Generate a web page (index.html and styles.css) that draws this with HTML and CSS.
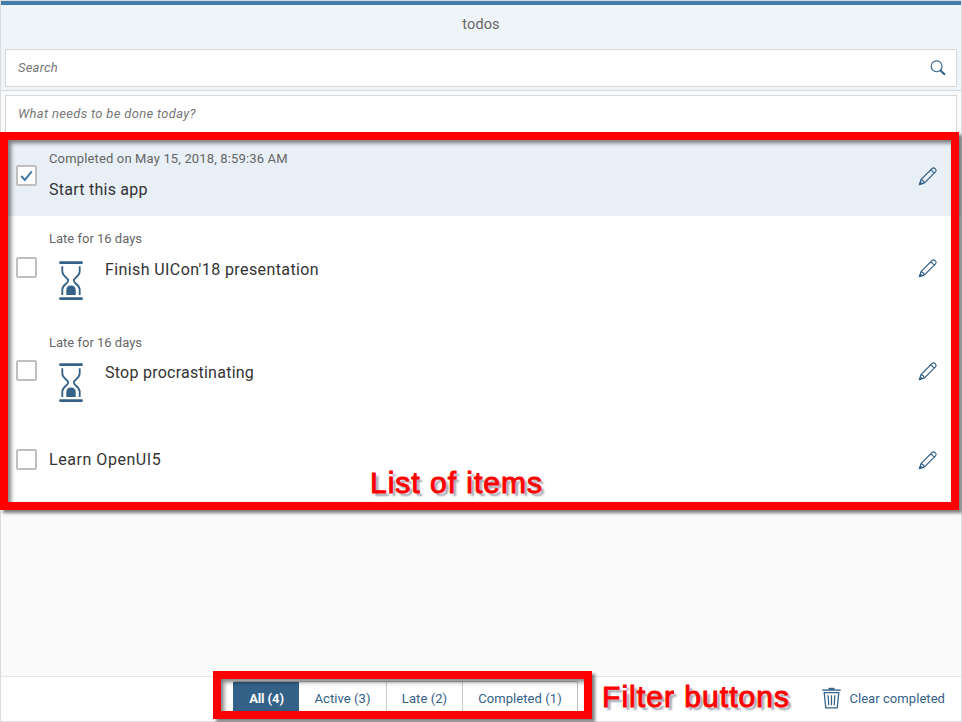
FILE: index.html
```
<!DOCTYPE html>
<html lang="en">
<head>
<meta charset="utf-8">
<title>todos</title>
<link rel="stylesheet" href="styles.css">
</head>
<body>
<svg class="sprite" aria-hidden="true">
  <symbol id="pencil" viewBox="0 0 20 20"><path d="M1.4 18.5 3 13.6 14.1 2.5Q15.6 1.2 17.1 2.6L17.6 3.1Q18.8 4.5 17.5 5.9L6.4 16.9Z M3 13.6Q5.6 14.2 6.4 16.9 M12.8 3.8 16.3 7.2" fill="none" stroke="currentColor" stroke-width="1.15"/><path d="m1.2 18.9 1.1-3.9 2.9 2.9z" fill="currentColor"/></symbol>
  <symbol id="hourglass" viewBox="0 0 24 40"><path d="M1.4 1.6H22.6M1.4 37.6H22.6" stroke="currentColor" stroke-width="2.8" stroke-linecap="round"/><path d="M3.3 5.2V10.5C3.3 15.5 9.2 16.5 9.2 19.5S3.3 24 3.3 28.5V34M20.7 5.2V10.5C20.7 15.5 14.8 16.5 14.8 19.5S20.7 24 20.7 28.5V34" fill="none" stroke="currentColor" stroke-width="1.8"/><path d="M7.3 34V29C7.3 26.3 9 24.4 12 24.4S16.7 26.3 16.7 29V34Z" fill="currentColor"/></symbol>
</svg>
<div class="page">
  <header class="header">
    <h1 class="title">todos</h1>
    <div class="field search"><span>Search</span>
      <svg class="search-icon" viewBox="0 0 16 16"><circle cx="6.6" cy="6.3" r="5.4" fill="none" stroke="currentColor" stroke-width="1.1"/><path d="m10.3 10.3 4.6 4.5" stroke="currentColor" stroke-width="2"/></svg>
    </div>
  </header>
  <main class="content">
    <div class="field new-todo"><span>What needs to be done today?</span></div>
    <ul class="list">
      <li class="item item-done">
        <span class="check"><svg viewBox="0 0 17 17"><path d="m3.2 9 3.7 4L13.8 4.4" fill="none" stroke="currentColor" stroke-width="2"/></svg></span>
        <div class="body"><p class="note note-done">Completed on May 15, 2018, 8:59:36 AM</p><p class="text t1">Start this app</p></div>
        <svg class="edit"><use href="#pencil"/></svg>
      </li>
      <li class="item item-late">
        <span class="check"></span>
        <div class="body"><p class="note">Late for 16 days</p><div class="row"><svg class="glass"><use href="#hourglass"/></svg><p class="text t2">Finish UICon'18 presentation</p></div></div>
        <svg class="edit"><use href="#pencil"/></svg>
      </li>
      <li class="item item-late item-third">
        <span class="check"></span>
        <div class="body"><p class="note">Late for 16 days</p><div class="row"><svg class="glass"><use href="#hourglass"/></svg><p class="text t3">Stop procrastinating</p></div></div>
        <svg class="edit"><use href="#pencil"/></svg>
      </li>
      <li class="item item-plain">
        <span class="check"></span>
        <div class="body"><p class="text t4">Learn OpenUI5</p></div>
        <svg class="edit"><use href="#pencil"/></svg>
      </li>
    </ul>
  </main>
  <footer class="footer">
    <div class="filters">
      <span class="filter f-all">All (4)</span><span class="filter f-active">Active (3)</span><span class="filter f-late">Late (2)</span><span class="filter f-completed">Completed (1)</span>
    </div>
    <div class="clear">
      <svg class="trash" viewBox="0 0 19 22"><path d="M.3 3.1H18.7" stroke="currentColor" stroke-width="1.4"/><path d="M6.5 2.7V1.5Q6.5.8 7.3.8h4.4q.8 0 .8.7v1.2Z" fill="currentColor"/><path d="M2.2 5.6 3.8 20.9H15.2L16.8 5.6ZM6.1 8.3 6.8 18.2M9.5 8.3V18.2M12.9 8.3 12.2 18.2" fill="none" stroke="currentColor" stroke-width="1.25"/></svg>
      <span>Clear completed</span>
    </div>
  </footer>
</div>
<div class="frame frame-list"></div>
<div class="frame frame-filters"></div>
<div class="label label-list">List of items</div>
<div class="label label-filters">Filter buttons</div>
</body>
</html>
```
FILE: styles.css
```
* { box-sizing: border-box; }
body { margin: 0; font-family: Roboto, "Noto Sans", sans-serif; font-size: 13px; color: #666; overflow: hidden; }
h1, p, ul { margin: 0; padding: 0; }
svg { display: block; flex: none; }
.sprite { position: absolute; width: 0; height: 0; }
.page { width: 962px; height: 722px; display: flex; flex-direction: column; border: 1px solid #dcdcdc; border-right-color: #d9dde0; background: #fafafa; }
.header { height: 90px; flex: none; border-top: 4px solid #427cac; border-bottom: 1px solid #d6d9dc; background: #eff4f9; padding: 0 4px; }
.title { height: 44px; line-height: 39px; text-align: center; font-size: 14.5px; font-weight: 400; letter-spacing: .1px; color: #666; }
.field { height: 38px; display: flex; align-items: center; justify-content: space-between; border: 1px solid #d5d8db; background: #fff; padding: 0 10px 2px 12px; font-style: italic; color: #777; letter-spacing: .2px; }
.search-icon { width: 16px; height: 16px; color: #346187; margin-top: 1px; }
.content { flex: 1; padding: 4px 0 0; }
.new-todo { margin: 0 4px; letter-spacing: .32px; }
.list { list-style: none; background: #fff; }
.item { display: flex; padding: 0 23px 0 15px; background: #fff; }
.item-done { height: 83px; background: #e8eff7; }
.item-late { height: 103px; }
.item-plain { height: 89px; }
.check { width: 21px; height: 21px; flex: none; border: 2px solid #bfbfbf; border-radius: 2px; background: #fff; color: #427cac; margin-top: 41px; }
.item-done .check { margin-top: 32px; }
.item-third .check { margin-top: 41px; }
.item-plain .check { margin-top: 27px; }
.check svg { width: 17px; height: 17px; }
.body { flex: 1; margin-left: 12px; padding-top: 14px; }
.item-done .body { padding-top: 17px; }
.item-third .body { padding-top: 15px; }
.item-plain .body { padding-top: 27px; }
.note { line-height: 18px; letter-spacing: 0; }
.note-done { letter-spacing: .15px; }
.text { font-size: 16px; line-height: 22px; color: #333; letter-spacing: .25px; }
.t1 { margin-top: 11px; }
.t2 { letter-spacing: .4px; margin-top: -2px; }
.t3 { margin-top: -1px; }
.t4 { letter-spacing: .55px; }
.row { display: flex; margin-top: 13px; }
.item-third .row { margin-top: 11px; }
.glass { width: 24px; height: 40px; margin: 0 22px 0 10px; color: #346187; }
.edit { width: 20px; height: 20px; color: #346187; margin-top: 42px; }
.item-done .edit { margin-top: 33px; }
.item-plain .edit { margin-top: 28px; }
.footer { height: 45px; flex: none; border-top: 1px solid #e5e5e5; background: #fff; display: flex; justify-content: space-between; padding: 4px 16px 0 232px; color: #346187; }
.filters { display: flex; height: 36px; border: 1px solid #bfbfbf; border-left: 0; border-radius: 2px; }
.filter { border-left: 1px solid #ccc; line-height: 34px; text-align: center; letter-spacing: .07px; }
.f-all { width: 66px; background: #346187; color: #fff; font-weight: 700; border-color: #346187; letter-spacing: -.1px; }
.f-active { width: 87px; border-left: 0; }
.f-late { width: 76px; }
.f-completed { width: 115px; }
.clear { display: flex; align-items: center; height: 34px; gap: 8px; letter-spacing: .06px; }
.trash { width: 19px; height: 22px; }
.frame { position: absolute; border: 8px solid #f00; box-shadow: 3px 3px 3px rgba(0,0,0,.5), inset 3px 3px 4px rgba(0,0,0,.5); }
.frame-list { left: 0; top: 132px; width: 959px; height: 378px; }
.frame-filters { left: 213px; top: 671px; width: 379px; height: 48px; }
.label { position: absolute; font: 30px/34px "Liberation Sans", sans-serif; color: #f00; -webkit-text-stroke: 1px #f00; letter-spacing: 1px; white-space: nowrap; text-shadow: 3px 3px 2px rgba(60,70,90,.5); }
.label-list { left: 370px; top: 466px; }
.label-filters { left: 602px; top: 680px; letter-spacing: 1.05px; }
```
